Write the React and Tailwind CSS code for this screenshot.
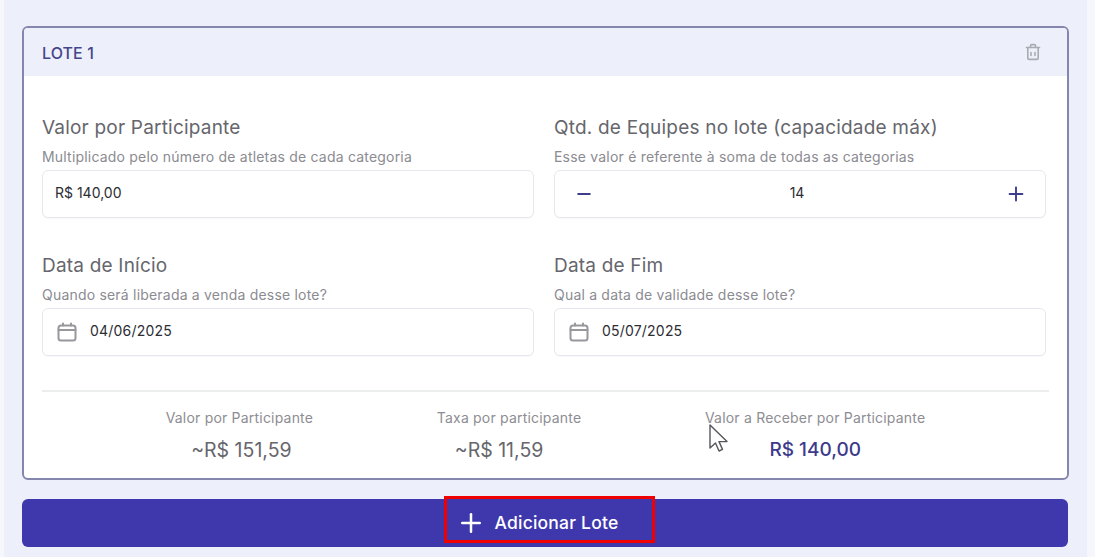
import { Minus, Plus } from "lucide-react";

const Field = ({ title, hint, children }) => (
  <div className="flex-1 min-w-0">
    <h3 className="text-[19px] leading-[24px] tracking-[0.2px] text-[#66666c] font-normal">{title}</h3>
    <p className="mt-[8px] text-[14px] leading-[18px] tracking-[0.2px] text-[#8b8b91]">{hint}</p>
    <div className="mt-[4px] h-[48px] bg-white border border-[#e6e7ec] rounded-md flex items-center text-[14px] text-[#2c2c33] shadow-[0_1px_1px_rgba(0,0,0,0.03)]">
      {children}
    </div>
  </div>
);

const CalendarIcon = () => (
  <svg width="20" height="20" viewBox="0 0 20 20" fill="none" stroke="#97979d" strokeWidth="2" strokeLinecap="round">
    <rect x="1.5" y="3.5" width="17" height="15" rx="2.5" />
    <path d="M1.5 8h17" />
    <path d="M6 1.5v2M14 1.5v2" />
  </svg>
);

const DateValue = ({ value }) => (
  <div className="flex items-center pl-[14px] -mt-[1px]">
    <CalendarIcon />
    <span className="ml-[13px] -mt-[3px] tracking-[0.2px]">{value}</span>
  </div>
);

const Summary = ({ label, value, accent, valueClass }) => (
  <div className="text-center">
    <p className="text-[14px] leading-[20px] text-[#8d8d93] tracking-[0.2px]">{label}</p>
    <p className={`mt-[9px] leading-[26px] ${valueClass} ${accent ? "text-[19px] text-[#3d3a8c] font-medium" : "text-[19.5px] text-[#66666c]"}`}>{value}</p>
  </div>
);

// lid, body and the two small slots of the header icon
const TrashIcon = () => (
  <svg width="16" height="18" viewBox="0 0 16 18" fill="none" stroke="#a9abb2" strokeWidth="1.6" strokeLinecap="round" strokeLinejoin="round">
    <path d="M1.5 4.5h13" />
    <path d="M5.5 4.5V2.6c0-.6.4-1 1-1h3c.6 0 1 .4 1 1v1.9" />
    <path d="M2.8 4.5v10.2c0 1 .7 1.7 1.7 1.7h7c1 0 1.7-.7 1.7-1.7V4.5" />
    <path d="M6 9.5v3M10 9.5v3" />
  </svg>
);

const CursorIcon = () => (
  <svg width="20" height="30" viewBox="0 0 20 30" fill="white" stroke="#55555c" strokeWidth="1.4" strokeLinejoin="round">
    <path d="M1 1v23l5.5-5 3.5 8 3.5-1.6-3.5-7.8H18z" />
  </svg>
);

export default function App() {
  return (
    <div className="h-[557px] w-[1095px] overflow-hidden bg-[#f6f7fc] pl-[4px] font-['Inter',sans-serif]">
      <div className="relative h-full w-[1083px] bg-[#edf0fa] pt-[26px] px-[18px]">
        <div className="h-[454px] w-[1047px] bg-white border-2 border-[#8586ad] rounded-md overflow-hidden">
          <div className="h-[48px] bg-[#edf0fa] flex items-center justify-between pl-[18px] pr-[26px]">
            <span className="text-[16px] mt-[1px] text-[#45458c] tracking-[0.1px] font-medium">LOTE 1</span>
            <TrashIcon />
          </div>

          <div className="px-[18px] pt-[40px]">
            <div className="flex gap-[20px] w-[1004px]">
              <Field title="Valor por Participante" hint="Multiplicado pelo número de atletas de cada categoria">
                <span className="pl-[12px] -mt-[3px]">R$ 140,00</span>
              </Field>
              <Field title="Qtd. de Equipes no lote (capacidade máx)" hint="Esse valor é referente à soma de todas as categorias">
                <div className="flex items-center justify-between w-full pl-[19px] pr-[18px] -mt-[1px]">
                  <Minus className="w-[20px] h-[20px] text-[#3f3d8f]" strokeWidth={2.4} />
                  <span className="-mt-[2px] mr-[5px]">14</span>
                  <Plus className="w-[22px] h-[22px] text-[#3f3d8f]" strokeWidth={2.1} />
                </div>
              </Field>
            </div>

            <div className="flex gap-[20px] w-[1004px] mt-[36px]">
              <Field title="Data de Início" hint="Quando será liberada a venda desse lote?">
                <DateValue value="04/06/2025" />
              </Field>
              <Field title="Data de Fim" hint="Qual a data de validade desse lote?">
                <DateValue value="05/07/2025" />
              </Field>
            </div>

            <div className="mt-[34px] h-[2px] w-[1007px] bg-[#eceded]" />

            <div className="mt-[16px] flex justify-evenly w-[1007px]">
              <Summary label="Valor por Participante" value="~R$ 151,59" valueClass="pl-[4px]" />
              <Summary label="Taxa por participante" value="~R$ 11,59" valueClass="pr-[20px]" />
              <Summary label="Valor a Receber por Participante" value="R$ 140,00" accent />
            </div>
          </div>
        </div>

        <button className="mt-[19px] h-[48px] w-[1046px] bg-[#3f38ad] rounded-md flex items-center justify-center pr-[16px] text-white text-[17.5px] tracking-[0.2px] font-medium">
          <Plus className="w-[30px] h-[30px] mr-[9px]" strokeWidth={2} />
          Adicionar Lote
        </button>

        {/* red highlight from the recording */}
        <div className="absolute left-[440px] top-[496px] w-[211px] h-[47px] border-[3px] border-[#f00000]" />

        <div className="absolute left-[705px] top-[424px]">
          <CursorIcon />
        </div>
      </div>
    </div>
  );
}
